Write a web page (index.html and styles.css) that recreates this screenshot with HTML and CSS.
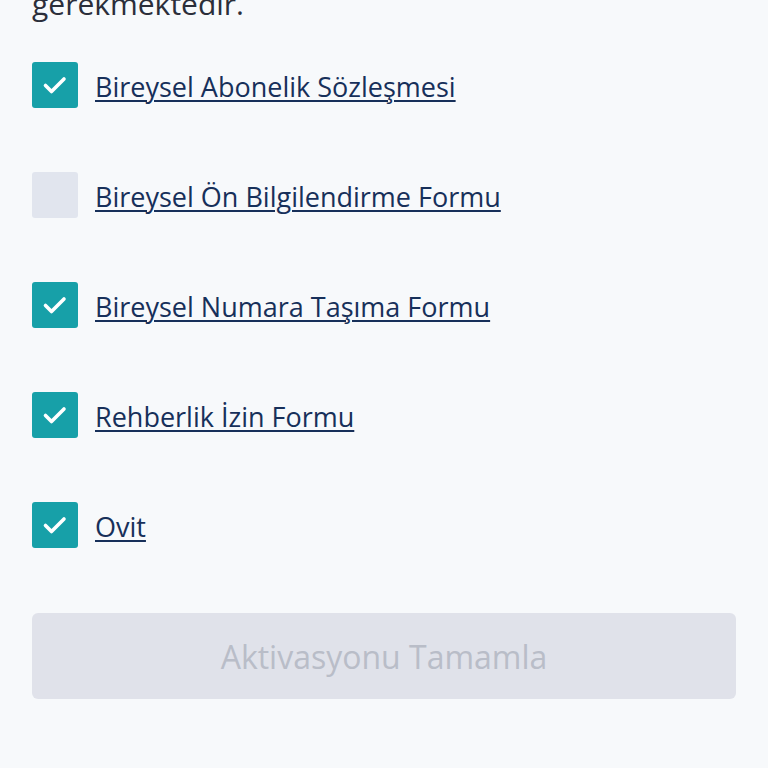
FILE: index.html
```html
<!DOCTYPE html>
<html lang="tr">
<head>
<meta charset="utf-8">
<link rel="stylesheet" href="styles.css">
</head>
<body>
<main class="page">
  <p class="intro">gerekmektedir.</p>
  <ul class="list">
    <li class="row">
      <span class="box checked"><svg viewBox="0 0 46 46" class="tick"><path d="M13.5 23.5l6 6 12.5-12.5"/></svg></span>
      <a class="link" href="#">Bireysel Abonelik Sözleşmesi</a>
    </li>
    <li class="row">
      <span class="box"></span>
      <a class="link" href="#">Bireysel Ön Bilgilendirme Formu</a>
    </li>
    <li class="row">
      <span class="box checked"><svg viewBox="0 0 46 46" class="tick"><path d="M13.5 23.5l6 6 12.5-12.5"/></svg></span>
      <a class="link" href="#">Bireysel Numara Taşıma Formu</a>
    </li>
    <li class="row">
      <span class="box checked"><svg viewBox="0 0 46 46" class="tick"><path d="M13.5 23.5l6 6 12.5-12.5"/></svg></span>
      <a class="link" href="#">Rehberlik İzin Formu</a>
    </li>
    <li class="row">
      <span class="box checked"><svg viewBox="0 0 46 46" class="tick"><path d="M13.5 23.5l6 6 12.5-12.5"/></svg></span>
      <a class="link" href="#">Ovit</a>
    </li>
  </ul>
  <button class="btn" type="button" disabled>Aktivasyonu Tamamla</button>
</main>
</body>
</html>
```
FILE: styles.css
```css
html, body {
  margin: 0;
  padding: 0;
  background: #f7f9fb;
}
body {
  font-family: "Open Sans", "Noto Sans", sans-serif;
  overflow: hidden;
  height: 768px;
}
.page {
  padding: 0 32px;
}
.intro {
  margin: -14px 0 8px;
  font-size: 30px;
  line-height: 36px;
  color: #2b2e3a;
}
.list {
  list-style: none;
  margin: 0;
  padding: 0;
}
.row {
  height: 110px;
  display: flex;
  align-items: center;
  gap: 17px;
}
.box {
  width: 46px;
  height: 46px;
  border-radius: 3px;
  background: #e1e5ee;
  flex: none;
  display: flex;
}
.box.checked {
  background: #17a0a8;
}
.tick {
  width: 46px;
  height: 46px;
}
.tick path {
  fill: none;
  stroke: #ffffff;
  stroke-width: 3.6;
  stroke-linecap: round;
  stroke-linejoin: round;
}
.link {
  font-size: 27px;
  color: #17305a;
  text-decoration: underline;
  text-decoration-thickness: 2px;
  text-underline-offset: 3px;
  line-height: 36px;
  padding-top: 3px;
}
.btn {
  display: block;
  width: 100%;
  height: 86px;
  margin-top: 33px;
  border: none;
  border-radius: 6px;
  background: #e0e2ea;
  color: #b9bdc8;
  font-family: inherit;
  font-size: 32px;
}
```
